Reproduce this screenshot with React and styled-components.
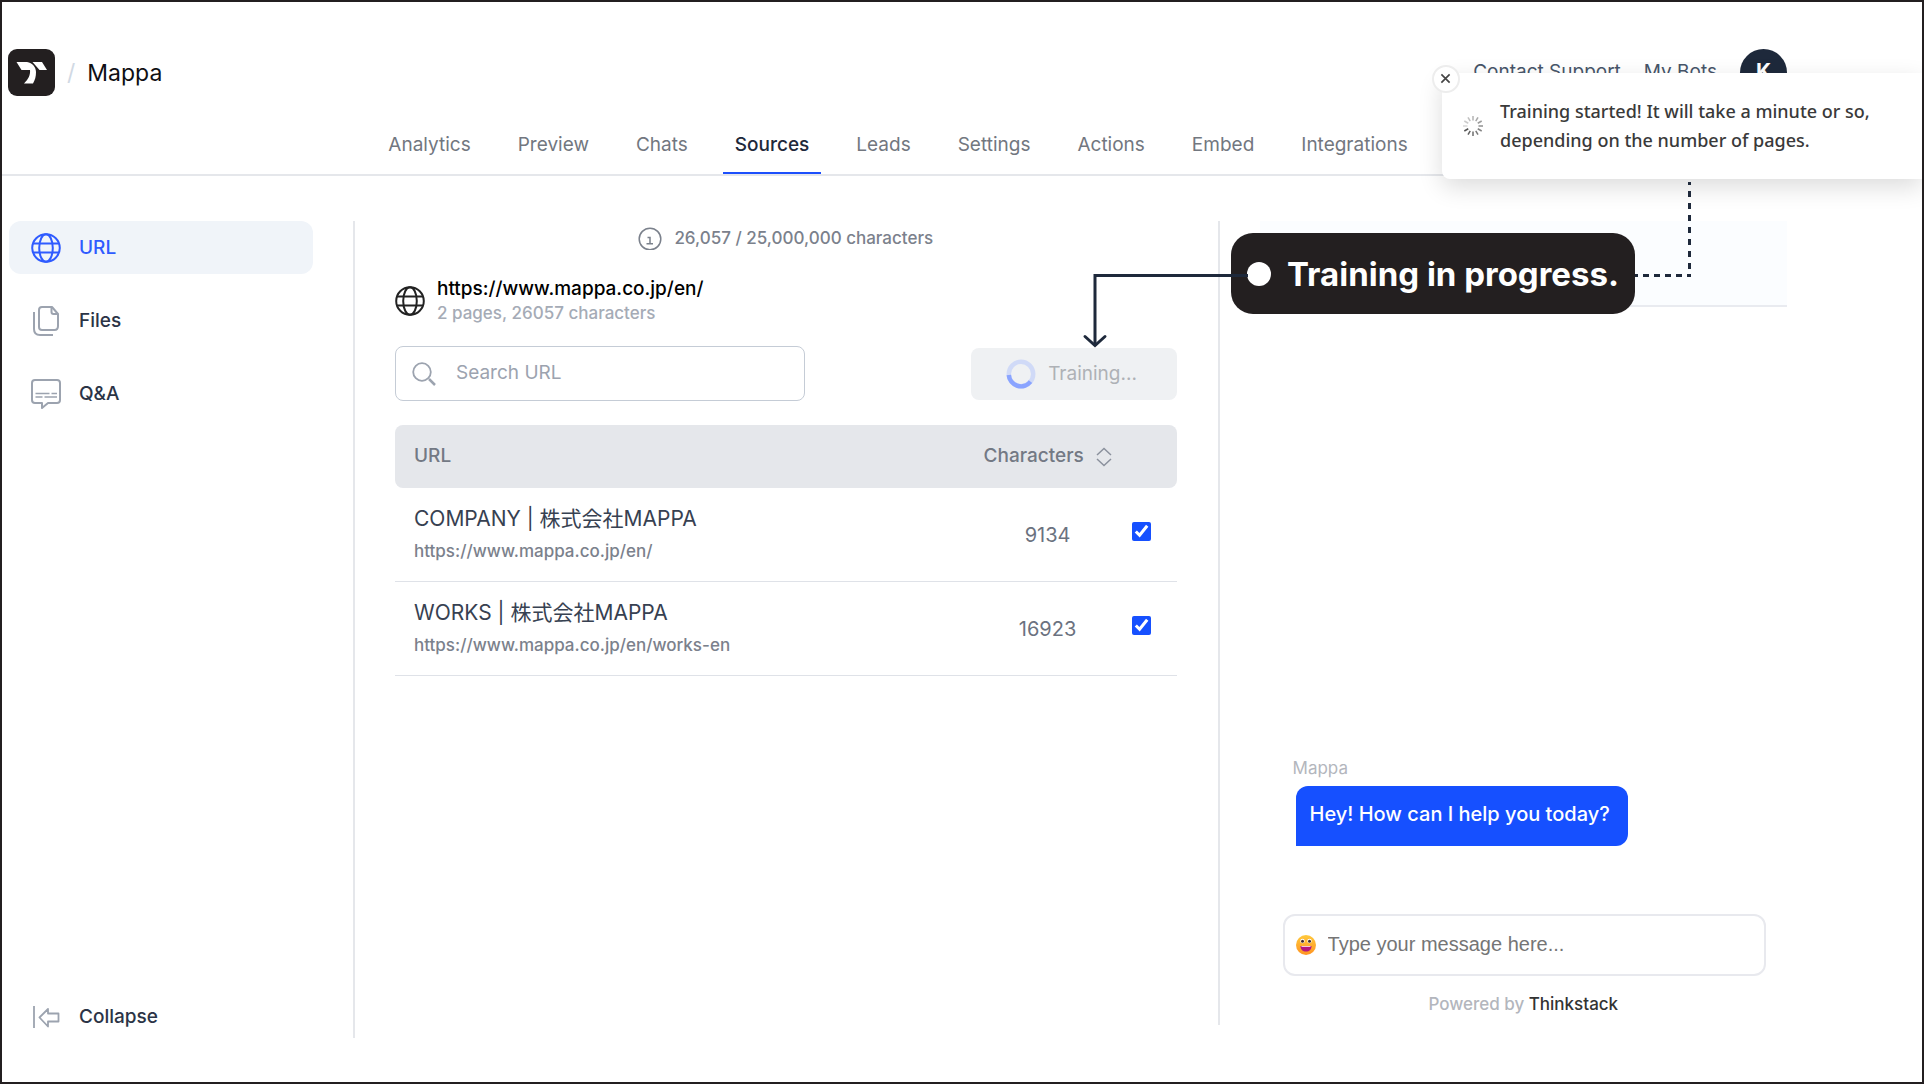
import React, { useState } from 'react';
import styled, { createGlobalStyle } from 'styled-components';

const GlobalStyle = createGlobalStyle`
  * {
    box-sizing: border-box;
  }

  body {
    margin: 0;
    background: #fff;
    font-family: Inter, 'Noto Sans CJK JP', sans-serif;
    font-size: 19px;
    color: #1e293b;
  }

  button, input {
    font-family: inherit;
  }

  a {
    color: inherit;
    text-decoration: none;
  }
`;

const Page = styled.div`
  position: relative;
  display: flex;
  flex-direction: column;
  min-height: 100vh;
  border: 2px solid #231f20;
  overflow: hidden;
`;

const Header = styled.header`
  padding-top: 47px;
  border-bottom: 2px solid #e5e7eb;
`;

const TopBar = styled.div`
  display: flex;
  align-items: center;
  height: 47px;
  padding: 0 135px 0 6px;
`;

const Slash = styled.span`
  margin: 0 12px;
  font-size: 23px;
  color: #d1d9e4;
`;

const BotName = styled.h1`
  margin: 0;
  font-size: 23px;
  font-weight: 400;
  color: #0f0f14;
`;

const TopLinks = styled.div`
  display: flex;
  align-items: center;
  gap: 23px;
  margin-left: auto;
  color: #475569;

  a {
    padding-bottom: 2px;
  }
`;

const Avatar = styled.button`
  width: 47px;
  height: 47px;
  padding: 0 0 2px;
  border: 0;
  border-radius: 50%;
  background: #1e293b;
  color: #fff;
  font-size: 21px;
  font-weight: 700;
`;

const Tabs = styled.nav`
  display: flex;
  justify-content: center;
  gap: 23px;
  margin-top: 28px;
  padding-right: 128px;
`;

const Tab = styled.a`
  height: 50px;
  padding: 7px 12px 0;
  border-bottom: 2px solid ${({ $active }) => ($active ? '#1d4ffc' : 'transparent')};
  font-size: 19px;
  font-weight: ${({ $active }) => ($active ? '500' : '400')};
  line-height: 28px;
  color: ${({ $active }) => ($active ? '#1e293b' : '#72777f')};
`;

const Body = styled.div`
  display: grid;
  flex: 1;
  grid-template-columns: 353px minmax(0, 16fr) minmax(0, 13fr);
  padding: 45px 0 44px;
`;

const Sidebar = styled.aside`
  display: flex;
  flex-direction: column;
  gap: 20px;
  padding: 0 40px 0 7px;
  border-right: 2px solid #e5e7eb;
`;

const SideItem = styled.button`
  display: flex;
  align-items: center;
  gap: 18px;
  height: 53px;
  padding: 0 22px;
  border: 0;
  border-radius: 12px;
  background: ${({ $active }) => ($active ? '#f0f4f9' : 'transparent')};
  font-size: 19px;
  font-weight: 500;
  color: ${({ $active }) => ($active ? '#2f5bff' : '#2b3446')};

  svg {
    color: ${({ $active }) => ($active ? '#2f5bff' : '#9ca3af')};
  }

  &:last-child {
    margin-top: auto;
    margin-bottom: -5px;
  }
`;

const Main = styled.main`
  display: flex;
  flex-direction: column;
  margin-bottom: 13px;
  padding: 0 41px 0 40px;
  border-right: 2px solid #e5e7eb;
`;

const Usage = styled.div`
  display: flex;
  align-items: center;
  justify-content: center;
  gap: 12px;
  height: 34px;
  font-size: 17px;
  font-weight: 500;
  color: #7b818c;
`;

const Source = styled.div`
  display: flex;
  align-items: center;
  gap: 12px;
  margin-top: 21px;
  height: 50px;
  color: #222;
`;

const SourceUrl = styled.a`
  display: block;
  font-size: 19px;
  font-weight: 500;
  line-height: 24px;
  color: #000;
`;

const SourceMeta = styled.div`
  font-size: 17px;
  font-weight: 500;
  line-height: 24px;
  color: #a5abb6;
`;

const Toolbar = styled.div`
  display: flex;
  align-items: center;
  justify-content: space-between;
  margin-top: 20px;
`;

const SearchBox = styled.label`
  display: flex;
  align-items: center;
  gap: 20px;
  width: 410px;
  height: 55px;
  padding: 0 16px;
  border: 1px solid #c5ccd6;
  border-radius: 8px;
  color: #9ca3af;
`;

const TextInput = styled.input`
  flex: 1;
  min-width: 0;
  padding: 0 0 2px;
  border: 0;
  outline: 0;
  background: transparent;
  font-size: 19px;

  &::placeholder {
    color: #9ca3af;
    opacity: 1;
  }
`;

const TrainButton = styled.button`
  display: flex;
  align-items: center;
  justify-content: center;
  gap: 12px;
  width: 206px;
  height: 52px;
  padding: 0 4px 0 0;
  border: 0;
  border-radius: 8px;
  background: #eff1f3;
  color: #aeb1b6;
  font-size: 19px;
`;

const Table = styled.table`
  width: 100%;
  margin-top: 24px;
  border-collapse: separate;
  border-spacing: 0;
`;

const HeadCell = styled.th`
  width: ${({ $width }) => $width};
  height: 63px;
  padding: 0 0 2px 19px;
  background: #e5e7eb;
  font-size: 19px;
  font-weight: 500;
  text-align: left;
  color: #737984;

  &:first-child {
    border-radius: 8px 0 0 8px;
  }

  &:last-child {
    border-radius: 0 8px 8px 0;
  }
`;

const SortButton = styled.button`
  display: flex;
  align-items: center;
  gap: 12px;
  padding: 0;
  border: 0;
  background: none;
  font: inherit;
  color: inherit;

  svg {
    margin-top: 2px;
  }
`;

const Cell = styled.td`
  height: 94px;
  padding: 0 0 0 ${({ $center }) => ($center ? '0' : '19px')};
  border-bottom: 1px solid #dfe2e8;
  text-align: ${({ $center }) => ($center ? 'center' : 'left')};
  font-size: 20px;
  color: #6b7280;
`;

const PageTitle = styled.div`
  font-size: 21px;
  line-height: 32px;
  color: #374151;
`;

const PageUrl = styled.a`
  font-size: 17px;
  font-weight: 500;
  line-height: 32px;
  color: #7b818c;
`;

const Check = styled.input`
  display: block;
  width: 19px;
  height: 19px;
  margin: 0 0 6px 1px;
  accent-color: #1650ff;
`;

const Chat = styled.section`
  display: flex;
  flex-direction: column;
  padding: 0 135px 0 40px;
`;

const ChatHeader = styled.div`
  height: 86px;
  border-bottom: 2px solid #e9ebf0;
  background: #fbfdff;
`;

const Messages = styled.div`
  display: flex;
  flex: 1;
  flex-direction: column;
  align-items: flex-start;
  justify-content: flex-end;
  padding: 0 33px 68px;
`;

const Sender = styled.div`
  font-size: 17px;
  line-height: 36px;
  color: #b3b6bd;
`;

const Bubble = styled.div`
  margin-left: 3px;
  padding: 0 18px 4px 14px;
  border-radius: 12px 12px 12px 0;
  background: #1650ff;
  color: #fff;
  font-size: 20px;
  font-weight: 500;
  line-height: 56px;
`;

const Composer = styled.label`
  display: flex;
  align-items: center;
  gap: 12px;
  height: 62px;
  margin: 0 21px 0 23px;
  padding: 0 11px;
  border: 2px solid #e8e9ee;
  border-radius: 12px;
`;

const MessageInput = styled(TextInput)`
  font-family: 'Liberation Sans', Arial, sans-serif;
  font-size: 20px;

  &::placeholder {
    color: #757575;
  }
`;

const Powered = styled.div`
  margin-bottom: 18px;
  padding-top: 12px;
  font-size: 17px;
  font-weight: 500;
  line-height: 32px;
  text-align: center;
  color: #b3b6bd;

  a {
    color: #333;
  }
`;

const Toast = styled.div`
  position: absolute;
  top: 71px;
  right: 0;
  display: flex;
  align-items: center;
  gap: 16px;
  width: 480px;
  height: 106px;
  padding: 0 40px 0 20px;
  border-radius: 8px 0 0 8px;
  background: #fff;
  box-shadow: 0 8px 24px rgba(0, 0, 0, 0.14);
  font-family: 'Noto Sans', sans-serif;
  font-size: 18px;
  font-weight: 500;
  line-height: 29px;
  color: #3a3a3a;
`;

const ToastClose = styled.button`
  position: absolute;
  top: -8px;
  left: -10px;
  display: flex;
  align-items: center;
  justify-content: center;
  width: 28px;
  height: 28px;
  padding: 0 1px 1px 0;
  border: 2px solid #ededed;
  border-radius: 50%;
  background: #fff;
  color: #444;
`;

const Connectors = styled.svg`
  position: absolute;
  top: 178px;
  right: 229px;
`;

const Callout = styled.div`
  position: absolute;
  top: 231px;
  right: 287px;
  display: flex;
  align-items: center;
  gap: 16px;
  height: 81px;
  padding: 0 16px;
  border-radius: 22px;
  background: #231f20;
  color: #fff;
  font-size: 33px;
  font-weight: 700;
  white-space: nowrap;
`;

const Dot = styled.span`
  width: 24px;
  height: 24px;
  border-radius: 50%;
  background: #fff;
`;

function Logo() {
  return (
    <svg width="47" height="47" viewBox="0 0 47 47">
      <rect width="47" height="47" rx="9" fill="#231f20" />
      <path d="M8.500 13H19C24.500 14 28 18 28 23C28 27.500 27 31 25 34.500H16C20.500 30 22.500 26 22 21H13.500Z" fill="#fff" />
      <path d="M24.500 13H34L39 21H31.500Z" fill="#fff" />
    </svg>
  );
}

function GlobeIcon() {
  return (
    <svg width="30" height="30" viewBox="0 0 30 30" fill="none" stroke="currentColor" strokeWidth="2">
      <circle cx="15" cy="15" r="13.800" />
      <ellipse cx="15" cy="15" rx="6.800" ry="13.800" />
      <path d="M2 10.500H28M2 19.500H28" />
    </svg>
  );
}

function FilesIcon() {
  return (
    <svg width="30" height="30" viewBox="0 0 30 30" fill="none" stroke="currentColor" strokeWidth="2" strokeLinejoin="round">
      <path d="M11 1H21L27 8V20C27 22.500 26 24 23.500 24H11C9 24 8 23 8 21V4C8 2 9 1 11 1Z" />
      <path d="M20.500 1.500V6C20.500 7.500 21 8 22.500 8H27" />
      <path d="M3 6V23C3 27 5 29 9 29H22" />
    </svg>
  );
}

function ChatIcon() {
  return (
    <svg width="30" height="30" viewBox="0 0 30 30" fill="none" stroke="currentColor" strokeWidth="2" strokeLinejoin="round">
      <path d="M4 1H26C28 1 29 2 29 4V21C29 23 28 24 26 24H17L11 29V24H4C2 24 1 23 1 21V4C1 2 2 1 4 1Z" />
      <path d="M4.500 14.500H18.500M20.500 14.500H26M4.500 18H11.500M13.500 18H26" strokeWidth="1.500" />
    </svg>
  );
}

function CollapseIcon() {
  return (
    <svg width="30" height="30" viewBox="0 0 30 30" fill="none" stroke="currentColor" strokeWidth="1.800" strokeLinejoin="round">
      <path d="M3 4V26" />
      <path d="M8.500 15.500L17 7V11.500H27.500V19.500H17V24.500Z" />
    </svg>
  );
}

function InfoIcon() {
  return (
    <svg width="24" height="24" viewBox="0 0 24 24" fill="none" stroke="currentColor" strokeWidth="1.500">
      <circle cx="12" cy="13" r="10.800" />
      <path d="M9.500 11.500H12V17.500M8.500 17.700H15" />
    </svg>
  );
}

function SearchIcon() {
  return (
    <svg width="24" height="24" viewBox="0 0 24 24" fill="none" stroke="currentColor" strokeWidth="1.800">
      <circle cx="10" cy="10" r="8.800" />
      <path d="M17 17L23 23" strokeWidth="2.500" />
    </svg>
  );
}

function RingSpinner() {
  return (
    <svg width="30" height="30" viewBox="0 0 30 30" fill="none" strokeWidth="4.500">
      <circle cx="15" cy="15" r="12.200" stroke="#d0daf7" />
      <path d="M2.800 16A12.200 12.200 0 0 0 24.500 22.700" stroke="#8aa4ff" />
    </svg>
  );
}

function SortIcon() {
  return (
    <svg width="16" height="20" viewBox="0 0 16 20" fill="none" stroke="#8b919d" strokeWidth="1.500">
      <path d="M1 8L8 1.500L15 8M1 12L8 18.500L15 12" />
    </svg>
  );
}

function BarsSpinner() {
  const bars = Array.from({ length: 12 }, (_, i) => i);
  return (
    <svg width="22" height="22" viewBox="-11 -11 22 22" stroke="#555" strokeWidth="1.500">
      {bars.map((i) => (
        <path key={i} d="M0 -5.500V-10" transform={`rotate(${240 - i * 30})`} opacity={1 - i * 0.07} />
      ))}
    </svg>
  );
}

function SmileIcon() {
  return (
    <svg width="20" height="20" viewBox="0 0 20 20">
      <defs>
        <linearGradient id="face" x1="0" y1="0" x2="0" y2="1">
          <stop offset="0" stopColor="#ffc93c" />
          <stop offset="1" stopColor="#ff9422" />
        </linearGradient>
      </defs>
      <circle cx="10" cy="10" r="10" fill="url(#face)" />
      <circle cx="6.500" cy="6" r="2.200" fill="#fff" />
      <circle cx="13.500" cy="6" r="2.200" fill="#fff" />
      <circle cx="6.500" cy="6.200" r="1.500" fill="#402a32" />
      <circle cx="13.500" cy="6.200" r="1.500" fill="#402a32" />
      <path d="M4.500 11H15.500C15.500 14.500 13.500 16.500 10 16.500S4.500 14.500 4.500 11Z" fill="#b5177e" />
      <path d="M5.500 11H14.500V12H5.500Z" fill="#f3c6dd" />
    </svg>
  );
}

const tabs = ['Analytics', 'Preview', 'Chats', 'Sources', 'Leads', 'Settings', 'Actions', 'Embed', 'Integrations'];

const pages = [
  { title: 'COMPANY | 株式会社MAPPA', url: 'https://www.mappa.co.jp/en/', characters: 9134 },
  { title: 'WORKS | 株式会社MAPPA', url: 'https://www.mappa.co.jp/en/works-en', characters: 16923 },
];

function SourcesTable() {
  const [checked, setChecked] = useState(pages.map(() => true));

  const toggle = (index) => {
    setChecked(checked.map((value, i) => (i === index ? !value : value)));
  };

  return (
    <Table>
      <thead>
        <tr>
          <HeadCell>URL</HeadCell>
          <HeadCell $width="166px">
            <SortButton type="button">
              Characters
              <SortIcon />
            </SortButton>
          </HeadCell>
          <HeadCell $width="46px" aria-label="Selected" />
        </tr>
      </thead>
      <tbody>
        {pages.map((page, i) => (
          <tr key={page.url}>
            <Cell>
              <PageTitle>{page.title}</PageTitle>
              <PageUrl href="#">{page.url}</PageUrl>
            </Cell>
            <Cell $center>{page.characters}</Cell>
            <Cell $center>
              <Check type="checkbox" aria-label={page.title} checked={checked[i]} onChange={() => toggle(i)} />
            </Cell>
          </tr>
        ))}
      </tbody>
    </Table>
  );
}

function App() {
  return (
    <Page>
      <GlobalStyle />
      <Header>
        <TopBar>
          <Logo />
          <Slash>/</Slash>
          <BotName>Mappa</BotName>
          <TopLinks>
            <a href="#">Contact Support</a>
            <a href="#">My Bots</a>
            <Avatar type="button">K</Avatar>
          </TopLinks>
        </TopBar>
        <Tabs>
          {tabs.map((tab) => (
            <Tab key={tab} href="#" $active={tab === 'Sources'}>{tab}</Tab>
          ))}
        </Tabs>
      </Header>

      <Body>
        <Sidebar>
          <SideItem type="button" $active><GlobeIcon />URL</SideItem>
          <SideItem type="button"><FilesIcon />Files</SideItem>
          <SideItem type="button"><ChatIcon />Q&amp;A</SideItem>
          <SideItem type="button"><CollapseIcon />Collapse</SideItem>
        </Sidebar>

        <Main>
          <Usage>
            <InfoIcon />
            26,057 / 25,000,000 characters
          </Usage>
          <Source>
            <GlobeIcon />
            <div>
              <SourceUrl href="#">https://www.mappa.co.jp/en/</SourceUrl>
              <SourceMeta>2 pages, 26057 characters</SourceMeta>
            </div>
          </Source>
          <Toolbar>
            <SearchBox>
              <SearchIcon />
              <TextInput type="text" placeholder="Search URL" aria-label="Search URL" />
            </SearchBox>
            <TrainButton type="button" disabled>
              <RingSpinner />
              Training...
            </TrainButton>
          </Toolbar>
          <SourcesTable />
        </Main>

        <Chat>
          <ChatHeader />
          <Messages>
            <Sender>Mappa</Sender>
            <Bubble>Hey! How can I help you today?</Bubble>
          </Messages>
          <Composer>
            <SmileIcon />
            <MessageInput type="text" placeholder="Type your message here..." aria-label="Message" />
          </Composer>
          <Powered>
            Powered by <a href="#">Thinkstack</a>
          </Powered>
        </Chat>
      </Body>

      <Toast role="status">
        <ToastClose type="button" aria-label="Close">
          <svg width="11" height="11" viewBox="0 0 12 12" stroke="currentColor" strokeWidth="1.800">
            <path d="M1.500 1.500L10.500 10.500M10.500 1.500L1.500 10.500" />
          </svg>
        </ToastClose>
        <BarsSpinner />
        <div>
          Training started! It will take a minute or so,
          <br />
          depending on the number of pages.
        </div>
      </Toast>

      <Callout>
        <Dot />
        Training in progress.
      </Callout>
      <Connectors width="613" height="172" viewBox="0 0 613 172" fill="none" stroke="#1e293b" strokeWidth="3">
        <path d="M168 95.500H15V166" />
        <path d="M5 156.500L15 165.500L25 156.500" strokeLinecap="round" />
        <path d="M609.500 2V97" strokeDasharray="6 6" strokeDashoffset="3" />
        <path d="M555 95.500H611" strokeDasharray="6 5" strokeDashoffset="3" />
      </Connectors>
    </Page>
  );
}

export default App;
